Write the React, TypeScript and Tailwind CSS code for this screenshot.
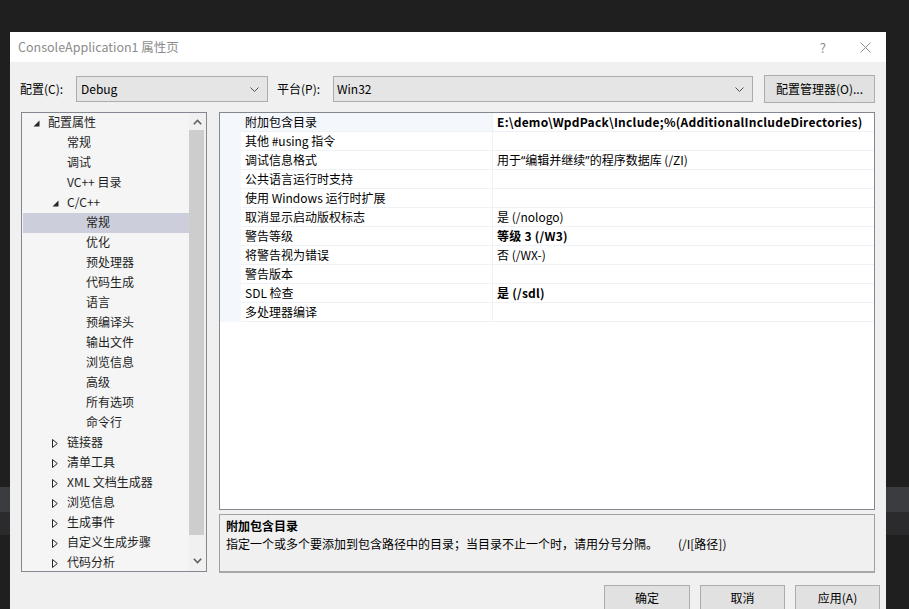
import React from "react";

type TreeItem = { label: string; level: number; exp?: "open" | "closed"; selected?: boolean };

const tree: TreeItem[] = [
  { label: "配置属性", level: 0, exp: "open" },
  { label: "常规", level: 1 },
  { label: "调试", level: 1 },
  { label: "VC++ 目录", level: 1 },
  { label: "C/C++", level: 1, exp: "open" },
  { label: "常规", level: 2, selected: true },
  { label: "优化", level: 2 },
  { label: "预处理器", level: 2 },
  { label: "代码生成", level: 2 },
  { label: "语言", level: 2 },
  { label: "预编译头", level: 2 },
  { label: "输出文件", level: 2 },
  { label: "浏览信息", level: 2 },
  { label: "高级", level: 2 },
  { label: "所有选项", level: 2 },
  { label: "命令行", level: 2 },
  { label: "链接器", level: 1, exp: "closed" },
  { label: "清单工具", level: 1, exp: "closed" },
  { label: "XML 文档生成器", level: 1, exp: "closed" },
  { label: "浏览信息", level: 1, exp: "closed" },
  { label: "生成事件", level: 1, exp: "closed" },
  { label: "自定义生成步骤", level: 1, exp: "closed" },
  { label: "代码分析", level: 1, exp: "closed" },
];

type Prop = { name: string; value: React.ReactNode; bold?: boolean };
const props: Prop[] = [
  { name: "附加包含目录", value: "E:\\demo\\WpdPack\\Include;%(AdditionalIncludeDirectories)", bold: true },
  { name: "其他 #using 指令", value: "" },
  {
    name: "调试信息格式",
    value: (
      <>
        用于<span className="font-['Noto_Sans',sans-serif]">“</span>编辑并继续
        <span className="font-['Noto_Sans',sans-serif]">”</span>的程序数据库 (/ZI)
      </>
    ),
  },
  { name: "公共语言运行时支持", value: "" },
  { name: "使用 Windows 运行时扩展", value: "" },
  { name: "取消显示启动版权标志", value: "是 (/nologo)" },
  { name: "警告等级", value: "等级 3 (/W3)", bold: true },
  { name: "将警告视为错误", value: "否 (/WX-)" },
  { name: "警告版本", value: "" },
  { name: "SDL 检查", value: "是 (/sdl)", bold: true },
  { name: "多处理器编译", value: "" },
];

function Chevron({ up }: { up?: boolean }) {
  return (
    <svg width="9" height="6" viewBox="0 0 9 6" className="block">
      <path
        d={up ? "M0.8 5.2 L4.5 1.5 L8.2 5.2" : "M0.8 0.8 L4.5 4.5 L8.2 0.8"}
        fill="none"
        stroke="#606060"
        strokeWidth="1.6"
      />
    </svg>
  );
}

function ComboChevron() {
  return (
    <svg width="9" height="5" viewBox="0 0 9 5" className="block">
      <path d="M0.5 0.5 L4.5 4.5 L8.5 0.5" fill="none" stroke="#505050" strokeWidth="1" />
    </svg>
  );
}

function Expander({ kind }: { kind?: "open" | "closed" }) {
  if (kind === "open")
    return (
      <svg width="7" height="7" viewBox="0 0 7 7" className="block">
        <polygon points="6.5,0.5 6.5,6.5 0.5,6.5" fill="#262626" />
      </svg>
    );
  if (kind === "closed")
    return (
      <svg width="6" height="9" viewBox="0 0 6 9" className="block">
        <polygon points="0.5,0.5 5.3,4.5 0.5,8.5" fill="none" stroke="#262626" strokeWidth="1" />
      </svg>
    );
  return null;
}

export default function App() {
  return (
    <div className="relative w-[909px] h-[609px] overflow-hidden bg-[#1f1f1f] font-['Noto_Sans_CJK_SC',sans-serif] text-[12px] text-black">
      {/* background bands from window behind */}
      <div className="flex flex-col">
        <div className="h-[487px]" />
        <div className="h-[25px] bg-[#3b3c40]" />
        <div className="h-[23px] bg-[#2b2b2e]" />
      </div>

      {/* dialog window */}
      <div className="absolute left-[10px] top-[32px] w-[876px] h-[590px] bg-[#f0f0f0] flex flex-col">
        {/* title bar */}
        <div className="h-[30px] bg-white flex items-center pl-[8px] pr-[15px] shrink-0">
          <span className="text-[12.5px] text-[#8c8c8c] leading-none">ConsoleApplication1 属性页</span>
          <div className="ml-auto flex items-center gap-[34px] text-[#8c8c8c]">
            <span className="text-[13px] leading-none">?</span>
            <svg width="11" height="11" viewBox="0 0 11 11" className="block">
              <path d="M0.5 0.5 L10.5 10.5 M10.5 0.5 L0.5 10.5" stroke="#8c8c8c" strokeWidth="1" />
            </svg>
          </div>
        </div>

        {/* toolbar */}
        <div className="flex items-center mt-[14px] h-[26px] pl-[10px] shrink-0">
          <span className="w-[56px] leading-none">配置(C):</span>
          <div className="w-[192px] h-[26px] border border-[#acacac] bg-[#e5e5e5] flex items-center pl-[4px] pr-[8px]">
            <span className="leading-none">Debug</span>
            <span className="ml-auto"><ComboChevron /></span>
          </div>
          <span className="ml-[9px] w-[56px] leading-none">平台(P):</span>
          <div className="w-[420px] h-[26px] border border-[#acacac] bg-[#e5e5e5] flex items-center pl-[3px] pr-[8px]">
            <span className="leading-none">Win32</span>
            <span className="ml-auto"><ComboChevron /></span>
          </div>
          <div className="ml-[11px] w-[111px] h-[28px] border border-[#adadad] bg-[#e1e1e1] flex items-center justify-center">
            <span className="leading-none">配置管理器(O)...</span>
          </div>
        </div>

        {/* main area */}
        <div className="flex mt-[10px] pl-[11px] h-[461px] shrink-0">
          {/* tree */}
          <div className="w-[186px] h-[460px] border border-[#828790] bg-[#f5f5f5] flex overflow-hidden">
            <div className="flex-1 flex flex-col pl-[1px] overflow-hidden">
              {tree.map((t, i) => (
                <div
                  key={i}
                  className={`h-[20px] shrink-0 flex items-center ${t.selected ? "bg-[#cccedb]" : ""}`}
                >
                  <div
                    className="flex items-center shrink-0"
                    style={{ paddingLeft: 10 + t.level * 19, width: 25 + t.level * 19 }}
                  >
                    <Expander kind={t.exp} />
                  </div>
                  <span className="leading-none whitespace-nowrap text-[#1e1e1e] -mt-[2px]">{t.label}</span>
                </div>
              ))}
            </div>
            {/* scrollbar */}
            <div className="w-[17px] bg-[#f0f0f0] flex flex-col items-center">
              <div className="h-[17px] w-full flex items-center justify-center shrink-0">
                <Chevron up />
              </div>
              <div className="w-[15px] h-[405px] bg-[#cdcdcd] mr-[2px]" />
              <div className="flex-1" />
              <div className="h-[17px] w-full flex items-center justify-center shrink-0 mb-[2px]">
                <Chevron />
              </div>
            </div>
          </div>

          {/* right column */}
          <div className="ml-[12px] w-[656px] flex flex-col">
            <div className="h-[398px] border border-[#828790] bg-white flex flex-col">
              {props.map((p, i) => (
                <div key={i} className="h-[19px] shrink-0 flex">
                  <div className="w-[21px] bg-[#f4f7fc] shrink-0" />
                  <div
                    className={`w-[252px] shrink-0 border-b border-r border-[#eef1f6] flex items-center pl-[4px] ${
                      i === 0 ? "bg-[#f4f7fc]" : ""
                    }`}
                  >
                    <span className="leading-none whitespace-nowrap">{p.name}</span>
                  </div>
                  <div className="flex-1 border-b border-[#eef1f6] flex items-center pl-[4px] overflow-hidden">
                    <span className={`leading-none whitespace-nowrap ${p.bold ? "font-bold tracking-[0.25px]" : ""}`}>
                      {p.value}
                    </span>
                  </div>
                </div>
              ))}
            </div>
            <div className="mt-[4px] h-[59px] border border-[#a0a0a0] border-b-2 border-b-[#a8a8a8] bg-[#f0f0f0] pl-[6px] pt-[4px] flex flex-col gap-[4px]">
              <span className="font-bold leading-[14px]">附加包含目录</span>
              <span className="leading-[14px] whitespace-nowrap">
                指定一个或多个要添加到包含路径中的目录；当目录不止一个时，请用分号分隔。
                <span className="ml-[20px]">(/I[路径])</span>
              </span>
            </div>
          </div>
        </div>

        {/* bottom buttons */}
        <div className="flex mt-[12px] pl-[594px] gap-[10px]">
          <div className="w-[86px] h-[26px] border border-[#adadad] bg-[#e1e1e1] flex items-center justify-center">
            <span className="leading-none">确定</span>
          </div>
          <div className="w-[85px] h-[26px] border border-[#adadad] bg-[#e1e1e1] flex items-center justify-center">
            <span className="leading-none">取消</span>
          </div>
          <div className="w-[85px] h-[26px] border border-[#adadad] bg-[#e1e1e1] flex items-center justify-center">
            <span className="leading-none">应用(A)</span>
          </div>
        </div>
      </div>
    </div>
  );
}
